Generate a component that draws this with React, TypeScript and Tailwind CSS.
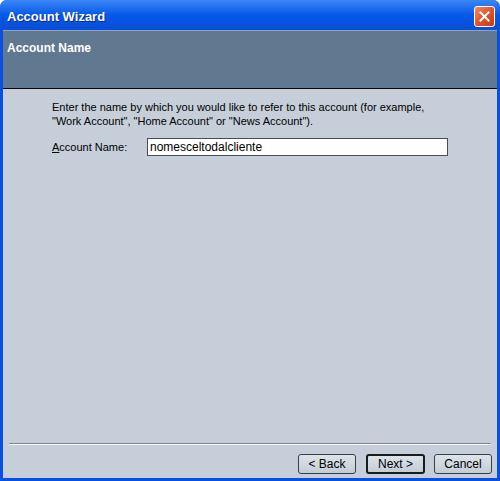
import React from 'react';

const font = "font-['Liberation_Sans',Arial,sans-serif]";

const XpButton = ({ label, isDefault }: { label: React.ReactNode; isDefault?: boolean }) => (
  <button
    className={`h-[20px] rounded-[3px] bg-gradient-to-b from-[#dde3ea] to-[#c3ccd6] text-[12px] text-black leading-none ${
      isDefault ? 'w-[59px] border-2 border-[#1b1b1b]' : 'w-[58px] border border-[#3a3f46]'
    }`}
  >
    {label}
  </button>
);

export default function App() {
  return (
    <div className={`w-[500px] h-[481px] flex flex-col bg-[#0750e0] rounded-t-[7px] overflow-hidden ${font}`}>
      {/* Title bar */}
      <div className="h-[30px] flex items-center justify-between pl-[7px] pr-[5px] bg-gradient-to-b from-[#3b86f5] via-[#0457e8] to-[#0a4fd6]">
        <span className="text-[13px] font-bold text-white [text-shadow:1px_1px_#0b2a8a] mt-[4px]">Account Wizard</span>
        <div className="w-[21px] h-[21px] mt-[2px] rounded-[3px] border border-white bg-gradient-to-br from-[#f08a63] via-[#e1542b] to-[#c53a12] flex items-center justify-center">
          <svg width="11" height="11" viewBox="0 0 11 11">
            <path d="M1.5 1.5 L9.5 9.5 M9.5 1.5 L1.5 9.5" stroke="white" strokeWidth="2" strokeLinecap="square" />
          </svg>
        </div>
      </div>

      {/* Client area */}
      <div className="flex-1 mx-[3px] mb-[3px] flex flex-col bg-[#c6cfd9]">
        {/* Header */}
        <div className="h-[59px] bg-[#617891] border-t border-[#8fa3b8] border-b border-b-[#000000] px-[4px] pt-[9px]">
          <div className="text-[12px] leading-[16px] font-bold text-white">Account Name</div>
        </div>

        {/* Body */}
        <div className="flex-1 flex flex-col">
          <div className="pl-[49px] pt-[11px] text-[11px] leading-[14px] text-black">
            <p>Enter the name by which you would like to refer to this account (for example,</p>
            <p>"Work Account", "Home Account" or "News Account").</p>
            <div className="flex items-center mt-[10px]">
              <label className="w-[95px]">
                <span className="underline">A</span>ccount Name:
              </label>
              <input
                type="text"
                defaultValue="nomesceltodalcliente"
                className="w-[301px] h-[18px] bg-white border border-[#4b4f55] px-[2px] text-[12px] text-black outline-none"
              />
            </div>
          </div>

          <div className="flex-1" />

          {/* Separator */}
          <div className="mx-[6px] border-t border-[#7d8894] border-b border-b-white" />

          {/* Buttons */}
          <div className="flex justify-end gap-[9px] pr-[5px] pt-[9px] pb-[4px]">
            <div className="flex gap-[10px]">
              <XpButton label="< Back" />
              <XpButton label="Next >" isDefault />
            </div>
            <XpButton label="Cancel" />
          </div>
        </div>
      </div>
    </div>
  );
}
